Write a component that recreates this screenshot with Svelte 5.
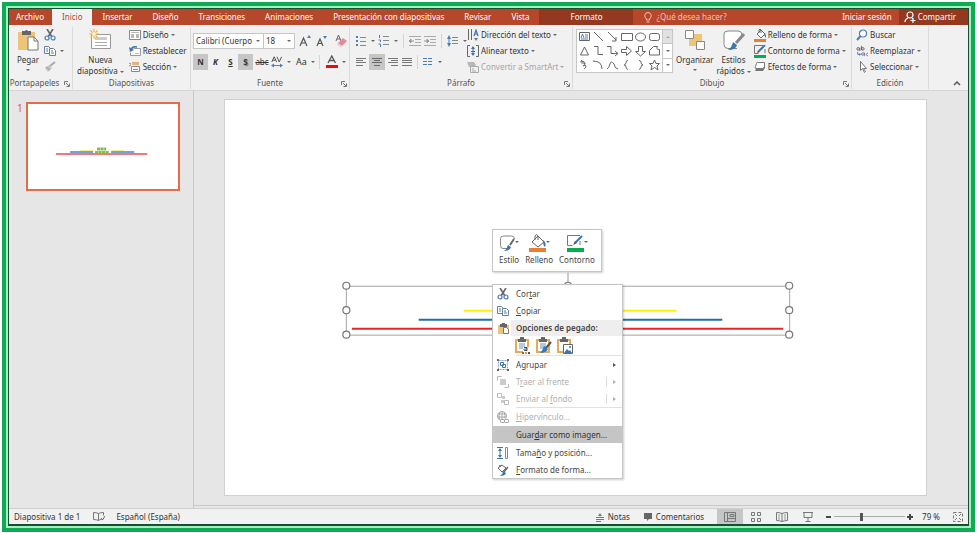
<script>
  const tabs = [
    "Archivo", "Inicio", "Insertar", "Diseño", "Transiciones",
    "Animaciones", "Presentación con diapositivas", "Revisar", "Vista",
  ];
  let curTab = $state("Inicio");
  let zoom = $state(38);

  const clip = `<path d="M1 3h11v14H1z" fill="#eec478"/><path d="M3 2h7v3H3z" fill="#666"/><path d="M5 1h3v2H5z" fill="#666"/>`;
  const miniClip = `<path d="M1 3h12v12H1z" fill="#fff" stroke="#e5ab5c" stroke-width="2"/><path d="M3 2h8v3H3zM5 0h4v3H5z" fill="#666"/><path d="M4 7h6M4 9h6M4 11h5" stroke="#6b8fb8"/>`;

  // inner markup of every icon, with the size of its box
  const icons = {
    paste: [22, 22, `<path d="M1 3h17v18H1z" fill="#eec478"/><path d="M5 2h3q1-2 3 0h3v4H5z" fill="#666"/><path d="M11 8h6l4 4v9H11z" fill="#fff" stroke="#777"/><path d="M17 8v4h4" fill="none" stroke="#777"/>`],
    cut: [12, 12, `<path d="M3 0l5 8M9 0L4 8" stroke="#666" stroke-width="1.6"/><circle cx="3" cy="9" r="2" fill="none" stroke="#4a7ebb" stroke-width="1.2"/><circle cx="9" cy="9" r="2" fill="none" stroke="#4a7ebb" stroke-width="1.2"/>`],
    copy: [12, 12, `<path d="M.5 1.5h4l2 2v5h-6z" fill="#fff" stroke="#6b7f99"/><path d="M5.500 3.500h4l2 2v5h-6z" fill="#fff" stroke="#6b7f99"/><path d="M2 4h2M2 6h2M7 6h2M7 8h3" stroke="#4a7ebb"/>`],
    brush: [12, 12, `<path d="M11 1L6 5" stroke="#aaa" stroke-width="2"/><path d="M5 4l3 3-4 4-3-4z" fill="#c4c4c4"/><path d="M2 6l4 3" stroke="#999"/>`],
    newSlide: [23, 22, `<path d="M2.500 5.500h19v14h-19z" fill="#fff" stroke="#999"/><path d="M6 8h12v3H6z" fill="#ccc"/><path d="M6 13.500h12M6 16.500h12" stroke="#aaa"/><path d="M5 0v10M0 5h10M1.500 1.500l7 7M8.500 1.500l-7 7" stroke="#eeb34d" stroke-width="1.200"/><circle cx="5" cy="5" r="2" fill="#fff3d2"/>`],
    layout: [12, 12, `<path d="M.5 1.500h11v9H.5z" fill="#fff" stroke="#888"/><path d="M2 3h8v1H2zM2 5h3v4H2zM7 5h3v4H7z" fill="#b8b8b8"/>`],
    reset: [12, 12, `<path d="M4.500 3.500h7v7h-10v-3" fill="#fff" stroke="#999"/><path d="M6 8.500h4" stroke="#bbb"/><path d="M2 5q1-4 6-3" fill="none" stroke="#3a75b8" stroke-width="1.500"/><path d="M0 2l1 5 4-2z" fill="#3a75b8"/>`],
    section: [12, 12, `<path d="M2.500 5.500h8v5h-8z" fill="#fff" stroke="#888"/><path d="M3 1h7v3H3z" fill="#e8b182"/><path d="M0 2l2 1M0 5l2-1M4 8.500h5" stroke="#d67a39"/>`],
    grow: [12, 12, `<path d="M1 11L4.500 3 8 11M2.500 8h4" fill="none" stroke="#555" stroke-width="1.200"/><path d="M8 3l2-3 2 3z" fill="#4a7ebb"/>`],
    shrink: [12, 12, `<path d="M2 11l3-7 3 7M3 8.500h4" fill="none" stroke="#555" stroke-width="1.200"/><path d="M8 1h4l-2 3z" fill="#4a7ebb"/>`],
    eraser: [12, 12, `<path d="M1 6L3.500 0 6 6M2 4h3" fill="none" stroke="#666"/><path d="M3 8l5-5 4 3-5 5z" fill="#e68a9b"/><path d="M3 8l4 3-1 1-4-3z" fill="#f3bcc6"/>`],
    spacing: [12, 12, `<path d="M.8 6L3.200.8 5.600 6M1.700 4.200h3M6 .8L8.200 6 10.600.8" fill="none" stroke="#555"/><path d="M2 9.500h8" stroke="#4a7ebb"/><path d="M0 9.500l3-2v4zM12 9.500l-3-2v4z" fill="#4a7ebb"/>`],
    fontColor: [12, 14, `<path d="M2 8L5.800 1 9.500 8M3.500 5.500h5" fill="none" stroke="#555" stroke-width="1.300"/><path d="M0 10h12v3H0z" fill="#e80c0c"/>`],
    bullets: [12, 12, `<path d="M1 1h2v2H1zM1 5h2v2H1zM1 9h2v2H1z" fill="#4a7ebb"/><path d="M5 2.500h6M5 6.500h6M5 10.500h6" stroke="#888"/>`],
    numbers: [12, 12, `<path d="M1.500 0v3M.5 5h2v2M.5 9h2v3" fill="none" stroke="#4a7ebb"/><path d="M5 1.500h6M5 5.500h6M5 9.500h6" stroke="#888"/>`],
    outdent: [12, 12, `<path d="M0 1.500h12M6 4.500h6M6 7.500h6M0 10.500h12" stroke="#aaa"/><path d="M0 6h5M0 6l2-2v4z" stroke="#999" fill="#999"/>`],
    indent: [12, 12, `<path d="M0 1.500h12M6 4.500h6M6 7.500h6M0 10.500h12" stroke="#aaa"/><path d="M0 6h5M5 6L3 4v4z" stroke="#999" fill="#999"/>`],
    lineSpacing: [12, 12, `<path d="M2 2v8" stroke="#4a7ebb"/><path d="M0 4l2-4 2 4zM0 8l2 4 2-4z" fill="#4a7ebb"/><path d="M5 2.500h6M5 5.500h6M5 8.500h6" stroke="#888"/>`],
    left: [12, 10, `<path d="M1 1.500h10M1 3.500h7M1 5.500h10M1 8.500h7" stroke="#777"/>`],
    center: [12, 10, `<path d="M1 1.500h10M3 3.500h6M1 5.500h10M3 8.500h6" stroke="#666"/>`],
    right: [12, 10, `<path d="M1 1.500h10M4 3.500h7M1 5.500h10M4 8.500h7" stroke="#777"/>`],
    justify: [12, 10, `<path d="M1 1.500h10M1 3.500h10M1 5.500h10M1 8.500h10" stroke="#777"/>`],
    columns: [12, 10, `<path d="M1 1.500h4M1 4.500h4M1 7.500h4M6 1.500h4M6 4.500h4M6 7.500h4" stroke="#4a7ebb"/>`],
    direction: [12, 12, `<path d="M1.500 0v11M4.500 0v11" stroke="#666"/><path d="M7 7l2-6 2 6M7.500 5h3" fill="none" stroke="#3a75b8" stroke-width="1.200"/><path d="M7 9h4l-2 3z" fill="#777"/>`],
    alignText: [12, 12, `<path d="M3 .5H.5v11H3M9 .5h2.500v11H9M4 6.500h4" fill="none" stroke="#666"/><path d="M6 2v8" stroke="#3a75b8"/><path d="M4 4l2-3 2 3zM4 8l2 3 2-3z" fill="#3a75b8"/>`],
    smartArt: [12, 12, `<path d="M0 1h7l2 3-2 2H2z" fill="#b8b8b8"/><path d="M3.500 5.500h8v6h-8z" fill="#f1f1f1" stroke="#aaa"/><path d="M5 8h2M5 10h4" stroke="#aaa"/>`],
    arrange: [22, 22, `<path d="M10 5h8v9h-8zM5 10h8v7H5z" fill="#eec478"/><path d="M1.500 1.500h8v8h-8zM12.500 12.500h8v8h-8z" fill="#fff" stroke="#888"/>`],
    styles: [24, 22, `<path d="M15 19.500H6q-4 0-4-4V5q0-3 4-3h10q4 0 4 4" fill="#fff" stroke="#888"/><path d="M22 5l-8 9" stroke="#888" stroke-width="3"/><path d="M11 13l4 3q-1 5-9 5 4-3 5-8z" fill="#3a75b8"/>`],
    fill: [12, 13, `<path d="M3 5l4-4 4 4-4 4z" fill="#fff" stroke="#666"/><path d="M5 4V1q1-2 2 0v3" fill="none" stroke="#666"/><path d="M11 4l1 3v2l-2-3z" fill="#3a75b8"/><path d="M0 10h12v3H0z" fill="#ed7d31"/>`],
    outline: [12, 13, `<path d="M9 .5H.5v8h4M11 4v4" fill="none" stroke="#777"/><path d="M11 0L5 6" stroke="#3a75b8" stroke-width="2"/><path d="M4 5l2 2-3 1z" fill="#555"/><path d="M0 10h12v3H0z" fill="#00b050"/>`],
    effects: [12, 12, `<path d="M2 8L1 10h8l2-3V4" fill="#777"/><path d="M2.500 2.500q0-1 1-1h7v4q-1 2-2 2h-7q-1 0 0-2z" fill="#fff" stroke="#777"/>`],
    find: [12, 12, `<circle cx="7" cy="4.500" r="3.500" fill="#fff" stroke="#4a7ebb" stroke-width="1.200"/><path d="M4.500 7L1 11" stroke="#4a7ebb" stroke-width="2"/>`],
    replace: [14, 12, `<circle cx="2.500" cy="3.500" r="1.500" fill="none" stroke="#555"/><path d="M4.500 2v4M6.500 0v5" stroke="#555"/><circle cx="8" cy="3.500" r="1.500" fill="none" stroke="#555"/><circle cx="8" cy="9.500" r="1.500" fill="none" stroke="#8064a2"/><path d="M10 8v4M14 8.500h-1q-2 1.500 0 3h1" fill="none" stroke="#8064a2"/><path d="M2 7v3h3M4 8.500L5.500 10 4 11.500" fill="none" stroke="#3a75b8"/>`],
    select: [12, 12, `<path d="M4.500.5v9l2-2 2 4 1-1-2-3h3z" fill="#fff" stroke="#777"/>`],
    launch: [6, 6, `<path d="M.5 4V.5H4M2 2l3 3M5.500 2.500v3h-3" fill="none" stroke="#777"/>`],
    bulb: [8, 11, `<path d="M2.500 7Q.5 5 .7 3.500q.5-3 3.300-3t3.300 3Q7.500 5 5.500 7v1h-3zM2.500 10h3" fill="none" stroke="#f0c4b6"/>`],
    person: [12, 12, `<circle cx="6" cy="4" r="3" fill="none" stroke="#fff" stroke-width="1.200"/><path d="M1 11q0-3 3-4M8 7l1 1M6.500 9.500h5M9 7v5" fill="none" stroke="#fff" stroke-width="1.200"/>`],
    menuPaste: [12, 12, clip.replace("v14", "v9") + `<path d="M6.500 5.500h3l2 2v4h-5z" fill="#fff" stroke="#777"/>`],
    pasteTheme: [16, 17, miniClip + `<path d="M8 10h8v7H8z" fill="#fff"/><path d="M9 10.500h3v3H9.500q-1-1 0-1.500H12" fill="none" stroke="#444"/><path d="M7 15h2v2H7z" fill="#c0504d"/><path d="M10 15h2v2h-2z" fill="#e89040"/><path d="M13 15h2v2h-2z" fill="#555"/>`],
    pasteSource: [16, 17, miniClip + `<path d="M15 5l-5 6" stroke="#555" stroke-width="2"/><path d="M8 9l4 3q-2 4-8 4 3-3 4-7z" fill="#3a75b8"/>`],
    pasteImage: [16, 17, `<path d="M1 3h12v12H1z" fill="#fff" stroke="#e5ab5c" stroke-width="2"/><path d="M3 2h8v3H3zM5 0h4v3H5z" fill="#666"/><path d="M6.500 7.500h9v9h-9z" fill="#fff" stroke="#666"/><path d="M7 16l3-4 2 2 1-1 2 3z" fill="#3a75b8"/><circle cx="13" cy="10" r="1" fill="#3a75b8"/>`],
    group: [12, 12, `<path d="M1.500 1.500h9v9h-9z" fill="none" stroke="#8ca0b8" stroke-dasharray="2 1"/><path d="M0 0h2v2H0zM10 0h2v2h-2zM0 10h2v2H0zM10 10h2v2h-2z" fill="#666"/><path d="M3.500 3.500h3v3h-3zM5.500 5.500h3v3h-3z" fill="#fff" stroke="#3a75b8"/>`],
    front: [12, 12, `<path d="M4.500 1V.5h-4v4H1M11.500 8v3.500h-4" fill="none" stroke="#bbb"/><path d="M3 3h6v6H3z" fill="#ccc"/>`],
    back: [12, 12, `<path d="M5 3h3v3H5zM4 7h3v3H4z" fill="#ccc"/><path d="M.5.5h4v4h-4zM7.500 7.500h4v4h-4z" fill="#fff" stroke="#bbb"/>`],
    link: [12, 12, `<circle cx="5" cy="5" r="4.500" fill="none" stroke="#aaa"/><path d="M1 3h8M0 6h9M5 0v9M3 1q-2 4 0 8M7 1q2 4 0 6" fill="none" stroke="#aaa"/><path d="M4 8h8v4H4z" fill="#fff"/><rect x="3.500" y="8.500" width="4" height="3" rx="1" fill="none" stroke="#999"/><rect x="7.500" y="8.500" width="4" height="3" rx="1" fill="none" stroke="#999"/>`],
    size: [12, 12, `<path d="M0 .5h6M0 11.500h6M3 2v8" stroke="#3a75b8"/><path d="M1 4l2-3 2 3zM1 8l2 3 2-3z" fill="#3a75b8"/><path d="M8.500.5h2v11h-2z" fill="#fff" stroke="#888"/>`],
    format: [12, 12, `<path d="M1 4l4-3 4 3-4 4z" fill="#fff" stroke="#666"/><path d="M3 3V1M11 3L7 8" stroke="#666" stroke-width="1.500"/><path d="M6 7l3 2q-1 3-6 3 3-2 3-5z" fill="#3a75b8"/>`],
    miniStyle: [20, 18, `<path d="M11 14.500H4q-2.500 0-2.500-3v-7q0-2.500 3-2.500h8q3 0 3 3" fill="#fff" stroke="#888"/><path d="M15 5l-4 6" stroke="#666" stroke-width="2"/><path d="M9 11l3 2q-1 4-7 4 3-2 4-6z" fill="#3a75b8"/><path d="M16 7h4l-2 2z" fill="#666"/>`],
    miniFill: [22, 18, `<path d="M4 8l6-6 6 6-6 5z" fill="#fff" stroke="#666"/><path d="M7 6V2q1-3 3 0v4" fill="none" stroke="#666"/><path d="M15 6q4 3 2 7-2-1-2-7z" fill="#3a75b8"/><path d="M1 14h17v4H1z" fill="#ed7d31"/><path d="M18 7h4l-2 2z" fill="#666"/>`],
    miniOutline: [22, 18, `<path d="M14 1.500H1.500v10h5M14 7v4" fill="none" stroke="#777"/><path d="M16 2l-7 7" stroke="#3a75b8" stroke-width="2"/><path d="M9 7l2 2-4 2z" fill="#555"/><path d="M1 14h17v4H1z" fill="#00b050"/><path d="M18 7h4l-2 2z" fill="#666"/>`],
    spell: [12, 10, `<path d="M5.500 1.500v7M5.500 1.500q-2-1-5-1v7q3 0 5 1 1-1 3-1M5.500 1.500q2-1 5-1v3" fill="none" stroke="#777"/><path d="M8 6l1.500 2L12 4" fill="none" stroke="#666"/>`],
    notes: [10, 10, `<path d="M1 5.500h8M1 7.500h8M1 9.500h5" stroke="#777"/><path d="M3 4l2-3 2 3z" fill="#777"/>`],
    comment: [10, 10, `<path d="M1 1h8v6H6L4 9V7H1z" fill="#666"/>`],
    normal: [12, 10, `<path d="M.5.5h11v9H.5zM3.500 1v8M4 6.500h7M6 2.500h4v2H6z" fill="none" stroke="#777"/>`],
    sorter: [12, 10, `<path d="M1.500.5h3v3h-3zM7.500.5h3v3h-3zM1.500 6.500h3v3h-3zM7.500 6.500h3v3h-3z" fill="none" stroke="#777"/>`],
    reading: [12, 10, `<path d="M6 1.500v8M6 1.500q-2-1-5.500-1v8q3 0 5.500 1 3-1 5.500-1v-8Q8 .5 6 1.500" fill="none" stroke="#777"/><path d="M2 3h2M2 5h2M2 7h2M8 3h2M8 5h2M8 7h2" stroke="#999"/>`],
    show: [12, 10, `<path d="M1 .5h10M2 1v4.500h8V1M6 6v3M3.500 9.500h5" fill="none" stroke="#777"/>`],
    fit: [10, 10, `<path d="M.5.5h9v9h-9z" fill="none" stroke="#777" stroke-dasharray="3 2"/><path d="M2 2l2 2M8 2L6 4M2 8l2-2M8 8L6 6" stroke="#777"/>`],
  };

  const shapes = [
    `<path d="M1.500 1.500h10v8h-10z" fill="#fff" stroke="#666"/><path d="M3 7l1.500-4L6 7M7 4h3M7 6h3M3 8h7" fill="none" stroke="#4a7ebb"/>`,
    `<path d="M2 1l9 9"/>`,
    `<path d="M2 1l8 8M10 6v4H6"/>`,
    `<path d="M1.500 2.500h11v7h-11z"/>`,
    `<ellipse cx="6.500" cy="6" rx="5" ry="4"/>`,
    `<rect x="1.500" y="2.500" width="10" height="7" rx="2"/>`,
    `<path d="M6.500 2l4 8h-8z"/>`,
    `<path d="M2 1.500h4v8h5"/>`,
    `<path d="M1 1.500h4v7h6M9 6l3 2.500L9 11"/>`,
    `<path d="M1.500 4.500h5V1.500l5 4.500-5 4.500v-3h-5z"/>`,
    `<path d="M4.500 1.500h4v5h3l-5 4.500-5-4.500h3z"/>`,
    `<path d="M1.500 5.500l4-4h4q-2 3 2 3v5.500h-10z"/>`,
    `<path d="M4 1q-3 3 1 3t0 3q3-2 3 0t-2 3M3 2q4 0 4 3"/>`,
    `<path d="M1 2q9 0 9 8"/>`,
    `<path d="M1 10Q3 9 4 5t4 0q1 5 4 5"/>`,
    `<path d="M8 1.500q-2 0-2 2t-2 2.500q2 0 2 2t2 2.500"/>`,
    `<path d="M5 1.500q2 0 2 2t2 2.500q-2 0-2 2t-2 2.500"/>`,
    `<path d="M6.500 1l1.500 3.500h3.500l-2.500 2.500 1 4-3.500-2.500L3 11l1-4-2.500-2.500H5z"/>`,
  ];
</script>

{#snippet icon(name)}
  <svg width={icons[name][0]} height={icons[name][1]} viewBox="0 0 {icons[name][0]} {icons[name][1]}" aria-hidden="true">
    {@html icons[name][2]}
  </svg>
{/snippet}

{#snippet tool(name, label, caret)}
  <button class="tool">{@render icon(name)}<span>{label}</span>{#if caret}<i class="caret"></i>{/if}</button>
{/snippet}

{#snippet small(name, label, caret)}
  <button class="small" aria-label={label}>{@render icon(name)}{#if caret}<i class="caret"></i>{/if}</button>
{/snippet}

{#snippet caption(label, launcher)}
  <footer>
    <span>{label}</span>
    {#if launcher}<button class="launcher" aria-label="{label}: más opciones">{@render icon("launch")}</button>{/if}
  </footer>
{/snippet}

<div class="frame">
  <div class="app">
    <nav>
      {#each tabs as tab}
        <button class="tab" class:current={curTab === tab} onclick={() => (curTab = tab)}>{tab}</button>
      {/each}
      <button class="tab contextual">Formato</button>
      <button class="tell">{@render icon("bulb")}<span>¿Qué desea hacer?</span></button>
      <button class="tab signin">Iniciar sesión</button>
      <button class="tab share">{@render icon("person")}<span>Compartir</span></button>
    </nav>

    <div class="ribbon">
      <section>
        <div class="body clipboard">
          <button class="big">{@render icon("paste")}<span>Pegar</span><i class="caret"></i></button>
          <div class="stack">
            {@render small("cut", "Cortar")}
            {@render small("copy", "Copiar", true)}
            {@render small("brush", "Copiar formato")}
          </div>
        </div>
        {@render caption("Portapapeles", true)}
      </section>

      <section>
        <div class="body slides">
          <button class="big">{@render icon("newSlide")}<span>Nueva</span><span>diapositiva<i class="caret"></i></span></button>
          <div class="stack">
            {@render tool("layout", "Diseño", true)}
            {@render tool("reset", "Restablecer")}
            {@render tool("section", "Sección", true)}
          </div>
        </div>
        {@render caption("Diapositivas")}
      </section>

      <section>
        <div class="body lines font">
          <div class="line">
            <label class="combo name"><select aria-label="Fuente"><option>Calibri (Cuerpo</option></select><i class="caret"></i></label>
            <label class="combo points"><select aria-label="Tamaño de fuente"><option>18</option></select><i class="caret"></i></label>
            {@render small("grow", "Aumentar")}
            {@render small("shrink", "Disminuir")}
            <hr>
            {@render small("eraser", "Borrar formato")}
          </div>
          <div class="line">
            <button class="letter on"><b>N</b></button>
            <button class="letter"><b><em>K</em></b></button>
            <button class="letter"><b><u>S</u></b></button>
            <button class="letter on shadow"><b>S</b></button>
            <button class="letter strike"><s>abc</s></button>
            {@render small("spacing", "Espaciado", true)}
            <button class="small case">Aa<i class="caret"></i></button>
            <hr>
            {@render small("fontColor", "Color de fuente", true)}
          </div>
        </div>
        {@render caption("Fuente", true)}
      </section>

      <section>
        <div class="body paragraph">
          <div class="lines">
            <div class="line">
              {@render small("bullets", "Viñetas", true)}
              {@render small("numbers", "Numeración", true)}
              <hr>
              {@render small("outdent", "Disminuir sangría")}
              {@render small("indent", "Aumentar sangría")}
              <hr>
              {@render small("lineSpacing", "Interlineado", true)}
            </div>
            <div class="line aligns">
              {@render small("left", "Izquierda")}
              <button class="small on" aria-label="Centrar">{@render icon("center")}</button>
              {@render small("right", "Derecha")}
              {@render small("justify", "Justificar")}
              <hr>
              {@render small("columns", "Columnas", true)}
            </div>
          </div>
          <div class="stack">
            {@render tool("direction", "Dirección del texto", true)}
            {@render tool("alignText", "Alinear texto", true)}
            <button class="tool" disabled>{@render icon("smartArt")}<span>Convertir a SmartArt</span><i class="caret"></i></button>
          </div>
        </div>
        {@render caption("Párrafo", true)}
      </section>

      <section>
        <div class="body drawing">
          <div class="gallery">
            <div class="shapes">
              {#each shapes as shape}
                <svg width="13" height="12" viewBox="0 0 13 12" fill="none" stroke="#666">{@html shape}</svg>
              {/each}
            </div>
            <div class="scroll">
              <button disabled aria-label="Arriba"><i class="caret up"></i></button>
              <button aria-label="Abajo"><i class="caret"></i></button>
              <button aria-label="Más formas"><i class="caret more"></i></button>
            </div>
          </div>
          <button class="big">{@render icon("arrange")}<span>Organizar</span><i class="caret"></i></button>
          <button class="big">{@render icon("styles")}<span>Estilos</span><span>rápidos<i class="caret"></i></span></button>
          <div class="stack">
            {@render tool("fill", "Relleno de forma", true)}
            {@render tool("outline", "Contorno de forma", true)}
            {@render tool("effects", "Efectos de forma", true)}
          </div>
        </div>
        {@render caption("Dibujo", true)}
      </section>

      <section>
        <div class="body editing">
          <div class="stack">
            {@render tool("find", "Buscar")}
            {@render tool("replace", "Reemplazar", true)}
            {@render tool("select", "Seleccionar", true)}
          </div>
        </div>
        {@render caption("Edición")}
      </section>

      <div class="collapse">
        <button aria-label="Contraer la cinta"><svg width="8" height="6" viewBox="0 0 8 6"><path d="M1 5l3-3 3 3" fill="none" stroke="#555" stroke-width="1.500"/></svg></button>
      </div>
    </div>

    <main>
      <aside>
        <span class="number">1</span>
        <button class="thumb" aria-label="Diapositiva 1">
          <svg viewBox="0 0 150 85">
            <path d="M28 50h91" stroke="#f0787c" stroke-width="2"/>
            <path d="M42 48h23M83 48h23" stroke="#6aa5dc" stroke-width="2"/>
            <path d="M52 46.500h13M83 46.500h13" stroke="#f3ef83"/>
            <path d="M69 45h9M67 48.500h14" stroke="#7cbf3f" stroke-width="3" stroke-dasharray="3 .5"/>
          </svg>
        </button>
      </aside>

      <div class="canvas">
        <div class="slide">
          <svg class="drawing-area" viewBox="0 0 702 396">
            <path d="M343.500 173v10" stroke="#999"/>
            <path d="M121.500 186.500h444v49h-444z" fill="none" stroke="#a3a3a3"/>
            <path d="M239 211h213" stroke="#fff000" stroke-width="2"/>
            <path d="M194 220h304" stroke="#1f6fa8" stroke-width="2"/>
            <path d="M127 229h432" stroke="#ec2227" stroke-width="2"/>
            {#each [[121.5, 186], [343.5, 186], [565, 186], [121.5, 210.5], [565, 210.5], [121.5, 235], [565, 235]] as [x, y]}
              <circle cx={x} cy={y} r="3.500" fill="#fff" stroke="#777" stroke-width="1.200"/>
            {/each}
          </svg>

          <div class="minibar">
            <button>{@render icon("miniStyle")}<span>Estilo</span></button>
            <button>{@render icon("miniFill")}<span>Relleno</span></button>
            <button>{@render icon("miniOutline")}<span>Contorno</span></button>
          </div>

          <div class="menu" role="menu">
            <button role="menuitem">{@render icon("cut")}<span>Cor<u>t</u>ar</span></button>
            <button role="menuitem">{@render icon("copy")}<span><u>C</u>opiar</span></button>
            <div class="heading">{@render icon("menuPaste")}<strong>Opciones de pegado:</strong></div>
            <div class="pastes">
              <button aria-label="Usar tema de destino">{@render icon("pasteTheme")}</button>
              <button aria-label="Mantener formato de origen">{@render icon("pasteSource")}</button>
              <button aria-label="Imagen">{@render icon("pasteImage")}</button>
            </div>
            <hr>
            <button role="menuitem">{@render icon("group")}<span>A<u>g</u>rupar</span><i class="sub"></i></button>
            <button role="menuitem" disabled>{@render icon("front")}<span>T<u>r</u>aer al frente</span><i class="sub split"></i></button>
            <button role="menuitem" disabled>{@render icon("back")}<span>Enviar al <u>f</u>ondo</span><i class="sub split"></i></button>
            <hr>
            <button role="menuitem" disabled>{@render icon("link")}<span><u>H</u>ipervínculo...</span></button>
            <button role="menuitem" class="hover"><span>Guar<u>d</u>ar como imagen...</span></button>
            <button role="menuitem">{@render icon("size")}<span>Tama<u>ñ</u>o y posición...</span></button>
            <button role="menuitem">{@render icon("format")}<span><u>F</u>ormato de forma...</span></button>
          </div>
        </div>
      </div>
    </main>

    <div class="status">
      <span>Diapositiva 1 de 1</span>
      <button aria-label="Ortografía">{@render icon("spell")}</button>
      <button>Español (España)</button>
      <button class="notes">{@render icon("notes")}Notas</button>
      <button class="comments">{@render icon("comment")}Comentarios</button>
      <div class="views">
        <button class="on" aria-label="Normal">{@render icon("normal")}</button>
        <button aria-label="Clasificador">{@render icon("sorter")}</button>
        <button aria-label="Lectura">{@render icon("reading")}</button>
        <button aria-label="Presentación">{@render icon("show")}</button>
      </div>
      <div class="zoom">
        <button aria-label="Alejar"><svg width="6" height="6" viewBox="0 0 6 6"><path d="M0 3h5" stroke="#444" stroke-width="2"/></svg></button>
        <input type="range" min="0" max="100" bind:value={zoom} aria-label="Zoom">
        <button aria-label="Acercar"><svg width="6" height="6" viewBox="0 0 6 6"><path d="M0 3h6M3 0v6" stroke="#444" stroke-width="2"/></svg></button>
      </div>
      <span class="percent">79 %</span>
      <button aria-label="Ajustar a la ventana">{@render icon("fit")}</button>
    </div>
  </div>
</div>

<style>
  :global(body) {
    background: #fff;
    color: #333;
    font: 8px/12px "Noto Sans", "Open Sans", sans-serif;
  }

  * {
    box-sizing: border-box;
  }

  button, select {
    font: inherit;
    color: inherit;
    background: none;
    border: 0;
    padding: 0;
    margin: 0;
    white-space: nowrap;
  }

  svg {
    display: block;
    flex: none;
  }

  hr {
    border: 0;
    margin: 0;
  }

  .frame {
    min-height: 100vh;
    padding: 2px;
    display: flex;
  }

  .app {
    flex: 1;
    min-width: 0;
    display: flex;
    flex-direction: column;
    border: 4px solid #0fab54;
    outline: 2px solid #a5f0c3;
    outline-offset: -6px;
    padding: 3px 3px 4px;
    background: #17502f;
  }

  /* tabs */
  nav {
    display: flex;
    height: 16px;
    background: #b7472a;
    color: #fff;
  }

  .tab {
    padding: 0 10px;
  }

  .tab:first-child {
    padding: 0 8px 0 7px;
  }

  .tab.current {
    background: #f1f1f1;
    color: #b7472a;
  }

  .tab.contextual {
    background: #943920;
    color: #fff;
    padding: 0 31px;
  }

  .tell {
    display: flex;
    align-items: center;
    gap: 4px;
    padding: 0 11px;
    color: #f0c4b6;
  }

  .signin {
    margin-left: auto;
    padding: 0 7px;
  }

  .share {
    display: flex;
    align-items: center;
    gap: 2px;
    padding: 0 12px 0 5px;
    background: #943920;
    color: #fff;
  }

  /* ribbon */
  .ribbon {
    display: grid;
    grid-template-columns: minmax(0, 64fr) minmax(0, 118fr) minmax(0, 159fr) minmax(0, 223fr) minmax(0, 279fr) minmax(0, 77fr) minmax(0, 39fr);
    background: #f1f1f1;
    border-bottom: 1px solid #d5d5d5;
    padding-top: 2px;
  }

  section {
    border-right: 1px solid #dadada;
    margin-bottom: 1px;
  }

  .body {
    display: flex;
    height: 50px;
  }

  footer {
    position: relative;
    height: 12px;
    text-align: center;
    color: #555;
  }

  .launcher {
    position: absolute;
    right: 2px;
    top: 4px;
  }

  .caret {
    display: inline-block;
    border: 2px solid transparent;
    border-top-color: #666;
    border-bottom: 0;
    margin-left: 2px;
    vertical-align: middle;
    flex: none;
  }

  .stack {
    display: flex;
    flex-direction: column;
  }

  .tool, .small {
    display: flex;
    align-items: center;
    height: 16px;
  }

  .tool svg {
    margin-right: 2px;
  }

  .tool:disabled {
    color: #a5a5a5;
  }

  .tool:disabled .caret {
    border-top-color: #a5a5a5;
  }

  .small .caret {
    margin-left: 4px;
  }

  .big {
    display: flex;
    flex-direction: column;
    align-items: center;
    justify-content: flex-start;
    padding-top: 2px;
    line-height: 11px;
  }

  .big svg {
    margin-bottom: 3px;
  }

  .big > .caret {
    margin: 4px 0 0;
  }

  .clipboard {
    padding-left: 8px;
    gap: 5px;
  }

  section:first-child footer {
    padding-right: 12px;
  }

  .slides {
    padding-left: 4px;
    gap: 5px;
  }

  .lines {
    display: flex;
    flex-direction: column;
    gap: 5px;
    padding-top: 6px;
  }

  .line {
    display: flex;
    align-items: center;
    height: 16px;
    gap: 3px;
  }

  .line hr {
    width: 1px;
    height: 14px;
    background: #d5d5d5;
    margin: 0 2px;
  }

  .font {
    padding-left: 2px;
  }

  .combo {
    display: flex;
    flex: none;
    align-items: center;
    justify-content: space-between;
    height: 16px;
    padding-right: 3px;
    background: #fff;
    border: 1px solid #c6c6c6;
  }

  .combo select {
    appearance: none;
    flex: 1;
    min-width: 0;
    outline: 0;
    padding-left: 2px;
  }

  .combo.name {
    width: 70px;
    border-right: 0;
  }

  .combo.points {
    width: 32px;
    margin-right: 4px;
  }

  .font .line:first-child {
    gap: 0;
  }

  .font .line:first-child .small {
    margin-right: 4px;
  }

  .font .line:last-child {
    gap: 0;
  }

  .letter {
    width: 15px;
    height: 16px;
  }

  .on {
    background: #c6c6c6;
  }

  .shadow {
    text-shadow: 1px 1px 1px #777;
  }

  .strike {
    width: 18px;
  }

  .case {
    margin: 0 4px 0 5px;
    font-size: 9px;
  }

  .font .line:last-child hr {
    margin: 0 6px 0 0;
  }

  .paragraph {
    padding-left: 5px;
    justify-content: space-between;
  }

  .paragraph .stack {
    padding-right: 10px;
  }

  .aligns .on {
    padding: 0 2px;
  }

  .aligns {
    gap: 2px;
  }

  .drawing {
    padding-left: 3px;
    gap: 3px;
  }

  .gallery {
    display: flex;
    flex: none;
    width: 97px;
    height: 44px;
    margin-top: 2px;
    background: #fff;
    border: 1px solid #c6c6c6;
  }

  .shapes {
    flex: 1;
    display: grid;
    grid-template-columns: repeat(6, 1fr);
    align-items: center;
    justify-items: center;
  }

  .scroll {
    width: 10px;
    display: grid;
    border-left: 1px solid #c6c6c6;
  }

  .scroll button + button {
    border-top: 1px solid #c6c6c6;
  }

  .scroll button {
    display: flex;
    align-items: center;
    justify-content: center;
  }

  .scroll button:disabled {
    background: #e1e1e1;
  }

  .scroll .caret {
    margin: 0;
  }

  .caret.up {
    transform: rotate(180deg);
    border-top-color: #aaa;
  }

  .caret.more {
    box-shadow: 0 -3px 0 -1px #666;
  }

  .editing {
    padding-left: 4px;
  }

  .editing .tool svg {
    width: 12px;
  }

  .collapse {
    display: flex;
    align-items: flex-end;
    justify-content: flex-end;
    padding: 0 7px 4px 0;
  }

  /* workspace */
  main {
    flex: 1;
    display: grid;
    grid-template-columns: minmax(0, 185fr) minmax(0, 774fr);
    background: #e6e6e6;
  }

  aside {
    display: flex;
    align-items: flex-start;
    padding: 11px 13px 0 8px;
    gap: 3px;
    border-right: 1px solid #c8c8c8;
  }

  .number {
    color: #d8603f;
    font-size: 10px;
  }

  .thumb {
    flex: 1;
    background: #fff;
    border: 2px solid #e46c4b;
  }

  .thumb svg {
    width: 100%;
  }

  .canvas {
    padding: 8px 41px 9px 30px;
    border-bottom: 1px solid #c8c8c8;
    margin-bottom: 2px;
  }

  .slide {
    position: relative;
    background: #fff;
    border: 1px solid #d0d0d0;
  }

  .drawing-area {
    width: 100%;
  }

  .minibar, .menu {
    position: absolute;
    left: 267px;
    background: #fff;
    border: 1px solid #c6c6c6;
    box-shadow: 1px 1px 2px #0003;
    color: #444;
  }

  .minibar {
    top: 129px;
    display: flex;
    gap: 6px;
    padding: 4px 6px 5px;
  }

  .minibar button {
    display: flex;
    flex-direction: column;
    align-items: center;
    gap: 2px;
  }

  .menu {
    top: 184px;
    width: 131px;
  }

  .menu > button, .heading {
    display: flex;
    align-items: center;
    width: 100%;
    height: 17px;
    gap: 7px;
    padding-left: 4px;
  }

  .menu > button:disabled {
    color: #b0b0b0;
  }

  .menu > .hover {
    background: #c5c5c5;
    color: #333;
    padding-left: 23px;
    margin: 1px 0;
  }

  .menu hr {
    height: 1px;
    margin-left: 23px;
    background: #e1e1e1;
  }

  .heading {
    gap: 2px;
  }

  .heading strong {
    flex: 1;
    line-height: 16px;
    padding-left: 5px;
    background: #eee;
    font-weight: 600;
  }

  .pastes {
    display: flex;
    gap: 5px;
    padding: 1px 0 1px 22px;
  }

  .sub {
    margin-left: auto;
    margin-right: 6px;
    border: 2px solid transparent;
    border-left: 3px solid #555;
    border-right: 0;
  }

  button:disabled .sub {
    border-left-color: #b0b0b0;
  }

  .sub.split {
    position: relative;
  }

  .sub.split::before {
    content: '';
    position: absolute;
    left: -10px;
    top: -5px;
    height: 10px;
    border-left: 1px solid #ddd;
  }

  /* status bar */
  .status {
    display: flex;
    align-items: center;
    height: 16px;
    padding: 0 5px;
    background: #f1f1f1;
    border-top: 1px solid #d0d0d0;
  }

  .status > button:nth-child(2) {
    margin: 0 11px 0 13px;
  }

  .notes, .comments {
    display: flex;
    align-items: center;
    gap: 3px;
  }

  .notes {
    margin-left: auto;
  }

  .comments {
    margin: 0 13px;
  }

  .views {
    display: flex;
    height: 100%;
  }

  .views button {
    width: 26px;
    display: flex;
    align-items: center;
    justify-content: center;
  }

  .zoom {
    display: flex;
    align-items: center;
    gap: 2px;
    margin-left: 5px;
  }

  .zoom input {
    appearance: none;
    width: 71px;
    height: 8px;
    margin: 0;
    background: linear-gradient(#aaa, #aaa) center / 100% 1px no-repeat;
  }

  .zoom input::-webkit-slider-thumb {
    appearance: none;
    width: 3px;
    height: 8px;
    background: #555;
  }

  .percent {
    margin: 0 13px 0 9px;
  }
</style>
